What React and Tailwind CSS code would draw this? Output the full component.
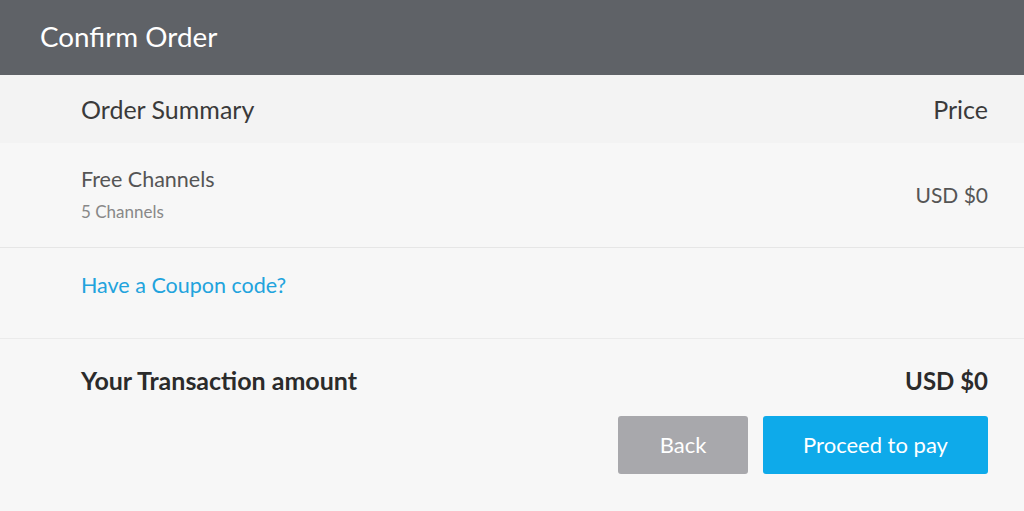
import React from 'react';

export default function App() {
    return (
        <div className="w-[1024px] h-[511px] bg-[#f7f7f7] flex flex-col" style={{ fontFamily: 'Lato, "Open Sans", sans-serif' }}>
            <div className="h-[75px] bg-[#5f6267] flex items-center px-[40px] shrink-0">
                <h1 className="text-white text-[27.8px] font-normal -mt-[2px]">Confirm Order</h1>
            </div>
            <div className="h-[68px] bg-[#f3f3f3] flex items-center justify-between pl-[81px] pr-[36px] text-[#3a3a3a] text-[25px] shrink-0">
                <span className="mt-[2px]">Order Summary</span>
                <span className="mt-[2px]">Price</span>
            </div>
            <div className="h-[105px] border-b border-[#e6e6e6] flex items-center justify-between pl-[81px] pr-[36px] shrink-0">
                <div className="flex flex-col -mt-[2px]">
                    <span className="text-[21.5px] text-[#555]">Free Channels</span>
                    <span className="text-[17px] text-[#888] mt-[4px]">5 Channels</span>
                </div>
                <span className="text-[21px] text-[#555]">USD $0</span>
            </div>
            <div className="h-[91px] border-b border-[#ebebeb] pl-[81px] pt-[21px] shrink-0">
                <a href="#" className="text-[21.5px] text-[#21a3dd]">Have a Coupon code?</a>
            </div>
            <div className="pl-[81px] pr-[36px] pt-[23px]">
                <div className="flex items-center justify-between text-[25px] font-bold text-[#2b2b2b]">
                    <span>Your Transaction amount</span>
                    <span className="text-[24px]">USD $0</span>
                </div>
                <div className="flex justify-end gap-[15px] mt-[16px]">
                    <button className="w-[130px] h-[58px] rounded-[3px] bg-[#a8a8ac] text-white text-[22px]">Back</button>
                    <button className="w-[225px] h-[58px] rounded-[3px] bg-[#0eaaea] text-white text-[22px]">Proceed to pay</button>
                </div>
            </div>
        </div>
    );
}
